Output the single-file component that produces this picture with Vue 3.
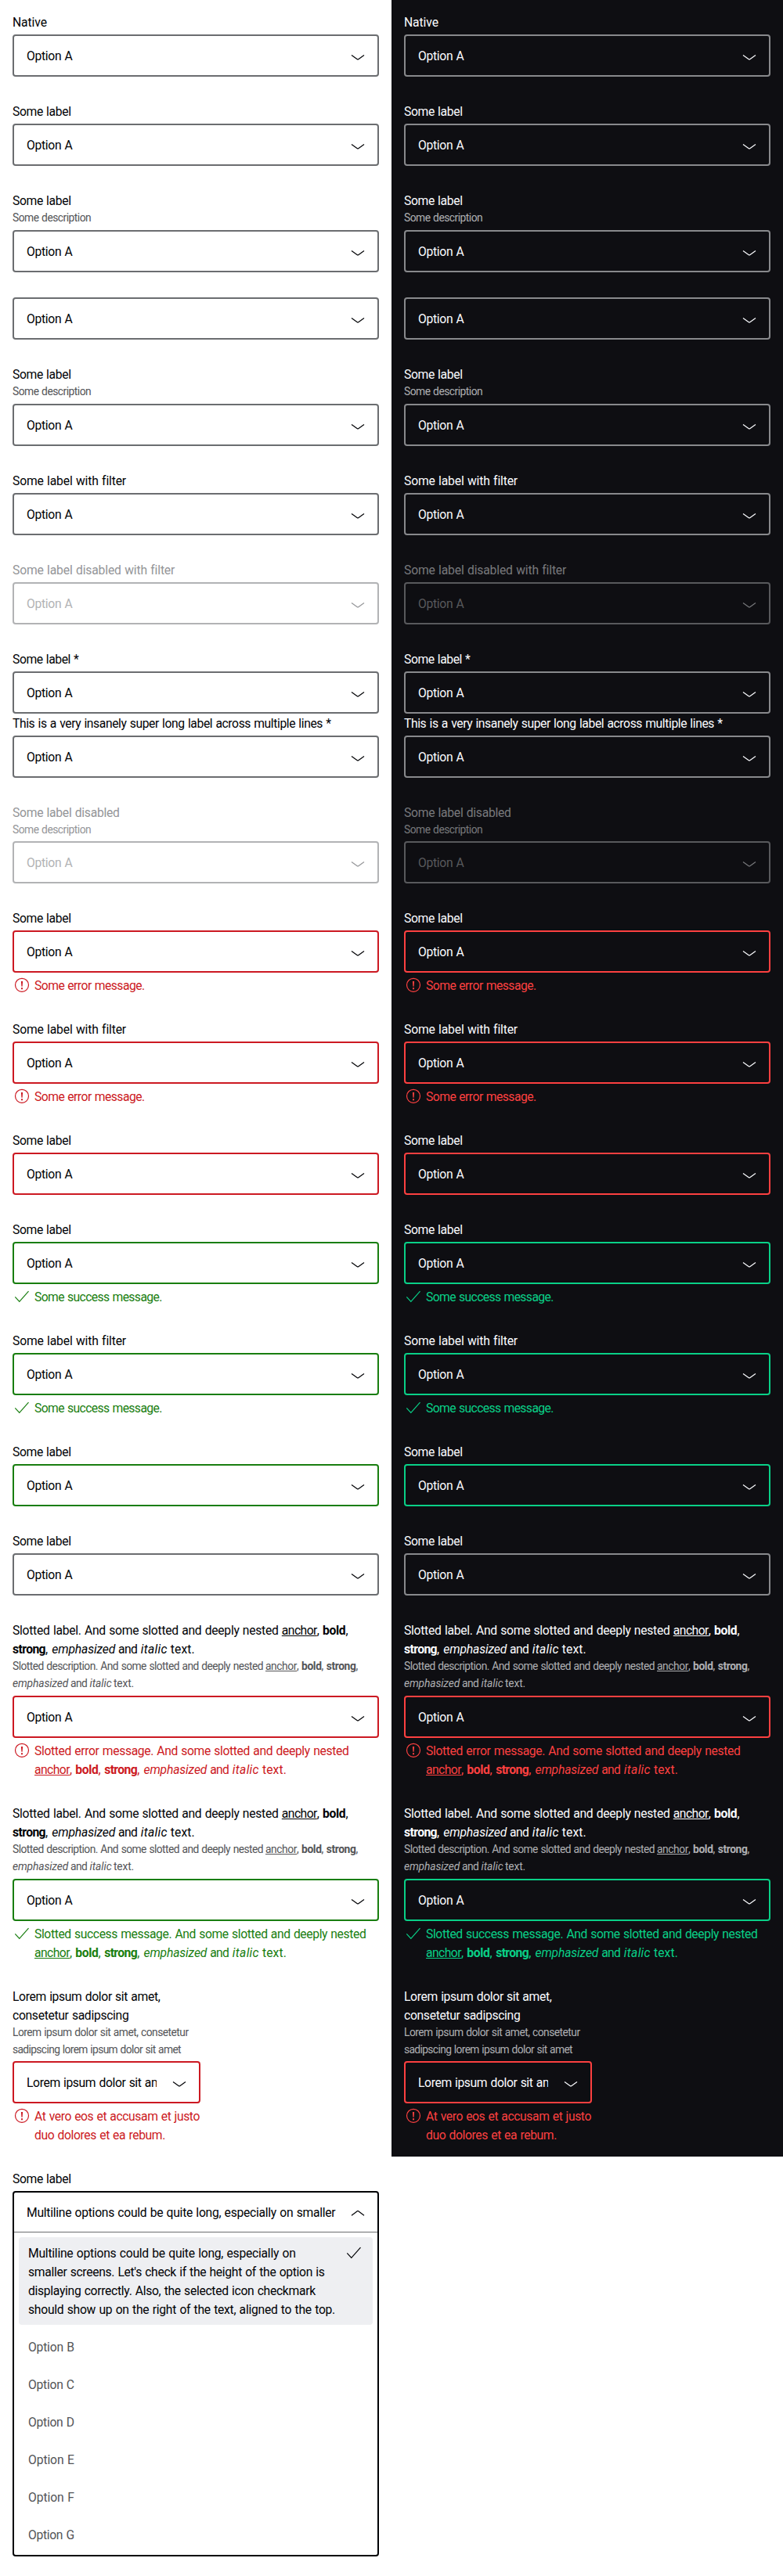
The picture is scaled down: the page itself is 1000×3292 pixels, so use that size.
<script setup>
// Each run is [text, drawn width, advance to the next run, kind]; a line is a list of runs.
const one = (text, width) => [[[text, width, width]]]

const option = one('Option A', 58.4)
const someLabel = one('Some label', 74.6)
const filterLabel = one('Some label with filter', 144.4)
const description = one('Some description', 100.2)
const errorText = one('Some error message.', 140.6)
const successText = one('Some success message.', 162.8)

const slottedLabel = [
  [
    ['Slotted label. And some slotted and deeply nested', 339.6, 343.8],
    ['anchor', 45, 45, 'link'],
    [',', 4.4, 7.2],
    ['bold', 29.4, 29.4, 'bold'],
    [',', 4.4, 4.4],
  ],
  [
    ['strong', 42, 42, 'bold'],
    [',', 4.4, 8.3],
    ['emphasized', 80.8, 84.7, 'em'],
    ['and', 24.2, 28.7],
    ['italic', 34, 38.1, 'em'],
    ['text.', 31, 31],
  ],
]
const slottedDescription = [
  [
    ['Slotted description. And some slotted and deeply nested', 320, 323],
    ['anchor', 40, 40, 'link'],
    [',', 4, 6],
    ['bold', 25.6, 25.6, 'bold'],
    [',', 4, 6.2],
    ['strong', 37.6, 37.6, 'bold'],
    [',', 4, 4],
  ],
  [
    ['emphasized', 71.2, 74, 'em'],
    ['and', 21.4, 24.4],
    ['italic', 28.4, 30.6, 'em'],
    ['text.', 26, 26],
  ],
]
const slottedTail = [
  ['anchor', 45, 45, 'link'],
  [',', 4.4, 7.2],
  ['bold', 29.4, 29.4, 'bold'],
  [',', 4.4, 7.6],
  ['strong', 42, 42, 'bold'],
  [',', 4.4, 8.3],
  ['emphasized', 80.8, 84.7, 'em'],
  ['and', 24.2, 28.7],
  ['italic', 34, 38.1, 'em'],
  ['text.', 31, 31],
]

const fields = [
  { label: one('Native', 44) },
  { label: someLabel },
  { label: someLabel, description },
  {},
  { label: someLabel, description },
  { label: filterLabel },
  { label: one('Some label disabled with filter', 206.6), disabled: true },
  { label: one('Some label *', 84.4), tight: true },
  { label: one('This is a very insanely super long label across multiple lines *', 406.6) },
  { label: one('Some label disabled', 136.6), description, disabled: true },
  { label: someLabel, state: 'error', message: errorText },
  { label: filterLabel, state: 'error', message: errorText },
  { label: someLabel, state: 'error' },
  { label: someLabel, state: 'success', message: successText },
  { label: filterLabel, state: 'success', message: successText },
  { label: someLabel, state: 'success' },
  { label: someLabel },
  {
    label: slottedLabel,
    description: slottedDescription,
    state: 'error',
    message: [[['Slotted error message. And some slotted and deeply nested', 401.4, 401.4]], slottedTail],
  },
  {
    label: slottedLabel,
    description: slottedDescription,
    state: 'success',
    message: [[['Slotted success message. And some slotted and deeply nested', 423.4, 423.4]], slottedTail],
  },
  {
    label: [
      [['Lorem ipsum dolor sit amet,', 188.4, 188.4]],
      [['consetetur sadipscing', 148.4, 148.4]],
    ],
    description: [
      [['Lorem ipsum dolor sit amet, consetetur', 224.6, 224.6]],
      [['sadipscing lorem ipsum dolor sit amet', 215, 215]],
    ],
    value: one('Lorem ipsum dolor sit amet', 185),
    state: 'error',
    narrow: true,
    message: [
      [['At vero eos et accusam et justo', 211, 211]],
      [['duo dolores et ea rebum.', 167, 167]],
    ],
  },
]

const openField = {
  label: someLabel,
  value: one('Multiline options could be quite long, especially on smaller', 394.4),
  open: true,
}
const selectedOption = [
  [['Multiline options could be quite long, especially on', 341.6, 341.6]],
  [["smaller screens. Let's check if the height of the option is", 378.6, 378.6]],
  [['displaying correctly. Also, the selected icon checkmark', 366.8, 366.8]],
  [['should show up on the right of the text, aligned to the top.', 392, 392]],
]

const columns = [
  { theme: 'light', fields: [...fields, openField] },
  { theme: 'dark', fields },
]
const letters = ['B', 'C', 'D', 'E', 'F', 'G']

// Tracks a run so that it fills its measured width.
const vFit = {
  mounted(el, { value: [width, advance] }) {
    const natural = el.getBoundingClientRect().width
    el.style.letterSpacing = `${(width - natural) / el.textContent.length}px`
    el.style.width = `${advance}px`
  },
}
</script>

<template>
  <main class="page">
    <section v-for="col in columns" :key="col.theme" class="column" :class="col.theme">
      <div
        v-for="(f, i) in col.fields"
        :key="i"
        class="field"
        :class="[f.state, { disabled: f.disabled, tight: f.tight, narrow: f.narrow, open: f.open }]"
      >
        <div v-if="f.label" class="label">
          <div v-for="(line, n) in f.label" :key="n" class="line">
            <span v-for="(r, k) in line" :key="k" v-fit="[r[1], r[2]]" class="run" :class="r[3]">{{ r[0] }}</span>
          </div>
        </div>
        <div v-if="f.description" class="description">
          <div v-for="(line, n) in f.description" :key="n" class="line">
            <span v-for="(r, k) in line" :key="k" v-fit="[r[1], r[2]]" class="run" :class="r[3]">{{ r[0] }}</span>
          </div>
        </div>
        <div class="control">
          <div class="select">
            <div class="value">
              <div v-for="(line, n) in f.value || option" :key="n" class="line">
                <span v-for="(r, k) in line" :key="k" v-fit="[r[1], r[2]]" class="run">{{ r[0] }}</span>
              </div>
            </div>
            <svg class="icon" viewBox="0 0 24 24">
              <path v-if="f.open" d="M4 16.2 11.3 10.7Q12 10.2 12.7 10.7L20 16.2" />
              <path v-else d="M4 11.4 11.3 16.7Q12 17.2 12.7 16.7L20 11.4" />
            </svg>
          </div>
          <div v-if="f.open" class="options">
            <div class="option selected">
              <div>
                <div v-for="(line, n) in selectedOption" :key="n" class="line">
                  <span v-for="(r, k) in line" :key="k" v-fit="[r[1], r[2]]" class="run">{{ r[0] }}</span>
                </div>
              </div>
              <svg class="icon" viewBox="0 0 24 24"><path d="M3.3 12.3 8.8 18.3 20.5 5.2" /></svg>
            </div>
            <div v-for="l in letters" :key="l" class="option">
              <div class="line"><span v-fit="[58.8, 58.8]" class="run">Option {{ l }}</span></div>
            </div>
          </div>
        </div>
        <div v-if="f.message" class="message">
          <svg v-if="f.state === 'error'" class="icon" viewBox="0 0 24 24">
            <circle cx="12" cy="11.8" r="8.5" />
            <path class="fill" d="M10.9 7h2.2l-.5 6.8h-1.2zM11 15.2h2v2h-2z" />
          </svg>
          <svg v-else class="icon" viewBox="0 0 24 24"><path d="M3.3 12.3 8.8 18.3 20.5 5.2" /></svg>
          <div>
            <div v-for="(line, n) in f.message" :key="n" class="line">
              <span v-for="(r, k) in line" :key="k" v-fit="[r[1], r[2]]" class="run" :class="r[3]">{{ r[0] }}</span>
            </div>
          </div>
        </div>
      </div>
    </section>
  </main>
</template>

<style>
body {
  margin: 0;
  background: #fff;
}
</style>

<style scoped>
.page {
  display: flex;
  align-items: flex-start;
  font-family: Roboto, 'Liberation Sans', sans-serif;
  font-size: 15.7px;
}
.column {
  --primary: #010205;
  --high: #535457;
  --medium: #6b6d70;
  --muted: #949598;
  --disabled: #b2b3b5;
  --error: #cc1922;
  --success: #197e10;
  box-sizing: border-box;
  width: 500px;
  padding: 16px;
  background: #fff;
  color: var(--primary);
}
.dark {
  --primary: #fbfcff;
  --high: #afb0b3;
  --medium: #88898c;
  --muted: #78797c;
  --disabled: #58595c;
  --error: #fc4040;
  --success: #09d087;
  background: #0e0e12;
}
.field {
  --border: var(--medium);
  margin-bottom: 32px;
}
.field:last-child {
  margin-bottom: 0;
}
.tight {
  margin-bottom: 0;
}
.narrow {
  width: 240px;
}
.error {
  --border: var(--error);
  --note: var(--error);
}
.success {
  --border: var(--success);
  --note: var(--success);
}
/* The taller line box sets the baseline one pixel lower within each 24px row. */
.line {
  display: flex;
  height: 24px;
  line-height: 26px;
  white-space: pre;
  word-spacing: 0.7px;
}
.run {
  flex: none;
}
.link {
  text-decoration: underline;
}
.bold {
  font-weight: 700;
}
.em {
  font-style: italic;
}
.label {
  color: var(--primary);
}
.description {
  color: var(--high);
  font-size: 13.8px;
}
.description .line {
  height: 21.82px;
  line-height: 21.82px;
}
.control {
  box-sizing: border-box;
  border: 2px solid var(--border);
  border-radius: 4px;
}
.label + .control,
.description + .control {
  margin-top: 4px;
}
.select {
  display: flex;
  align-items: center;
  gap: 8px;
  height: 50px;
  padding: 0 13px 0 16px;
}
.value {
  flex: 1;
  min-width: 0;
  margin-right: 9px;
  overflow: hidden;
}
.icon {
  flex: none;
  width: 24px;
  height: 24px;
  fill: none;
  stroke: currentColor;
  stroke-width: 1.2;
}
.fill {
  fill: currentColor;
  stroke: none;
}
.disabled {
  --border: var(--disabled);
}
.disabled .label,
.disabled .description,
.disabled .icon {
  color: var(--muted);
}
.disabled .value {
  color: var(--disabled);
}
.message {
  display: flex;
  gap: 4px;
  margin-top: 4px;
  color: var(--note);
}
.open {
  --border: var(--primary);
}
.open .value {
  margin-right: 0;
}
.options {
  display: flex;
  flex-direction: column;
  gap: 8px;
  padding: 6px;
  border-top: 1px solid var(--medium);
}
.option {
  display: flex;
  justify-content: space-between;
  padding: 8px 12px;
  border-radius: 4px;
  color: var(--high);
}
.selected {
  background: #eeeff2;
  color: var(--primary);
}
</style>
